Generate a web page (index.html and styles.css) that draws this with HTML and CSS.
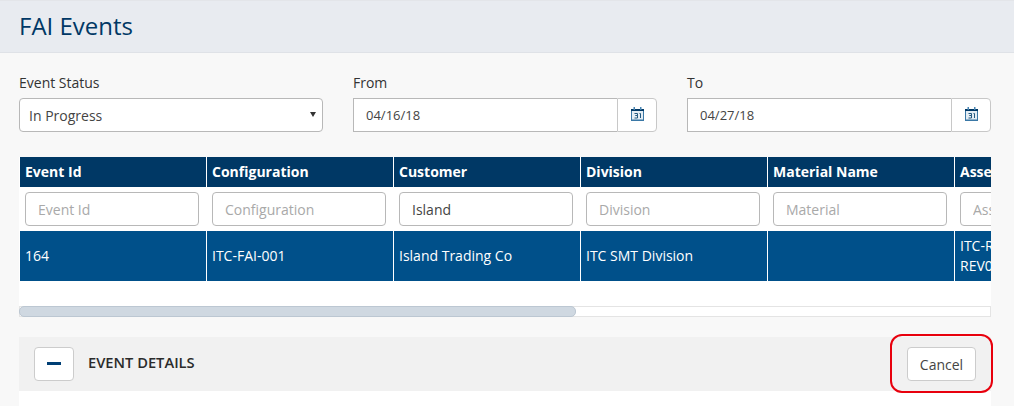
FILE: index.html
```html
<!DOCTYPE html>
<html lang="en">
<head>
<meta charset="utf-8">
<title>FAI Events</title>
<link rel="stylesheet" href="styles.css">
</head>
<body>
<header class="page-head"><h1>FAI Events</h1></header>
<main class="content">
  <form class="filters">
    <div class="field">
      <label for="status">Event Status</label>
      <div class="select-wrap">
        <select id="status" class="control"><option>In Progress</option></select>
      </div>
    </div>
    <div class="field">
      <label for="from">From</label>
      <div class="date-group">
        <input id="from" class="control date" type="text" value="04/16/18">
        <span class="addon"><svg class="cal" viewBox="0 0 13 14" width="13" height="14"><rect x="0.5" y="2.5" width="12" height="11" fill="#e4edf4" stroke="#3a78a6"/><rect x="0" y="2" width="13" height="2" fill="#003865"/><rect x="2.5" y="0" width="1.5" height="3" fill="#4a86b3"/><rect x="9" y="0" width="1.5" height="3" fill="#4a86b3"/><path d="M3.5 6.5h3v2h-2h2v2.5h-3M8.5 6.5h1v4.500" fill="none" stroke="#22587f" stroke-width="1"/><path d="M1 12.500h11" stroke="#8fb2cc" stroke-width="1"/></svg></span>
      </div>
    </div>
    <div class="field">
      <label for="to">To</label>
      <div class="date-group">
        <input id="to" class="control date" type="text" value="04/27/18">
        <span class="addon"><svg class="cal" viewBox="0 0 13 14" width="13" height="14"><rect x="0.5" y="2.5" width="12" height="11" fill="#e4edf4" stroke="#3a78a6"/><rect x="0" y="2" width="13" height="2" fill="#003865"/><rect x="2.5" y="0" width="1.5" height="3" fill="#4a86b3"/><rect x="9" y="0" width="1.5" height="3" fill="#4a86b3"/><path d="M3.5 6.5h3v2h-2h2v2.5h-3M8.5 6.5h1v4.500" fill="none" stroke="#22587f" stroke-width="1"/><path d="M1 12.500h11" stroke="#8fb2cc" stroke-width="1"/></svg></span>
      </div>
    </div>
  </form>

  <section class="grid-panel">
    <div class="grid-clip">
      <table class="grid">
        <thead>
          <tr class="head-row">
            <th>Event Id</th><th>Configuration</th><th>Customer</th><th>Division</th><th>Material Name</th><th>Assembly</th>
          </tr>
          <tr class="filter-row">
            <td><input class="control cell-input" placeholder="Event Id"></td>
            <td><input class="control cell-input" placeholder="Configuration"></td>
            <td><input class="control cell-input" value="Island"></td>
            <td><input class="control cell-input" placeholder="Division"></td>
            <td><input class="control cell-input" placeholder="Material"></td>
            <td><input class="control cell-input" placeholder="Assembly"></td>
          </tr>
        </thead>
        <tbody>
          <tr class="data-row">
            <td>164</td><td>ITC-FAI-001</td><td>Island Trading Co</td><td>ITC SMT Division</td><td></td><td>ITC-R<br>REV0</td>
          </tr>
        </tbody>
      </table>
    </div>
    <div class="scroll-track"><div class="scroll-thumb"></div></div>
  </section>

  <section class="details-bar">
    <button class="toggle" type="button" aria-label="Collapse"><span class="minus"></span></button>
    <h2>EVENT DETAILS</h2>
    <button class="cancel" type="button">Cancel</button>
    <span class="highlight"></span>
  </section>
  <div class="details-body"></div>
</main>
</body>
</html>
```
FILE: styles.css
```css
* { box-sizing: border-box; }
html, body { margin: 0; height: 100%; }
body {
  width: 1014px;
  height: 406px;
  overflow: hidden;
  background: #f8f8f8;
  font-family: "Open Sans", sans-serif;
  font-size: 14px;
  color: #333;
}
.page-head {
  height: 53px;
  background: #e8ebf0;
  border-top: 1px solid #e3e5e9;
  border-bottom: 1px solid #dfe2e7;
  padding-left: 19px;
}
.page-head h1 {
  margin: 0;
  font-size: 24px;
  font-weight: 400;
  line-height: 49px;
  color: #003865;
}
.content { padding: 20px 23px 0 19px; }
.filters {
  display: grid;
  grid-template-columns: repeat(3, 304px);
  column-gap: 30px;
}
.field label {
  display: block;
  height: 25px;
  line-height: 20px;
  font-size: 14px;
  color: #333;
}
.control {
  font-family: inherit;
  font-size: 14px;
  color: #444;
  background: #fff;
  border: 1px solid #b8b8b8;
  border-radius: 4px;
  height: 34px;
  outline: none;
}
.select-wrap { position: relative; width: 304px; }
.select-wrap select {
  width: 100%;
  appearance: none;
  padding: 0 9px;
}
.select-wrap::after {
  content: "";
  position: absolute;
  right: 7px;
  top: 14px;
  border-left: 3px solid transparent;
  border-right: 3px solid transparent;
  border-top: 5px solid #333;
}
.date-group { display: flex; height: 34px; }
.date {
  flex: 1;
  min-width: 0;
  padding: 0 12px;
  font-size: 13px;
  border-radius: 0;
  border-right: 0;
}
.addon {
  flex: 0 0 40px;
  display: flex;
  align-items: center;
  justify-content: center;
  background: #fff;
  border: 1px solid #c8c8c8;
  border-radius: 0 4px 4px 0;
}
.cal { display: block; margin-top: -2px; }
.grid-panel {
  margin-top: 25px;
  background: #fff;
  height: 160px;
}
.grid-clip { width: 972px; height: 149px; overflow: hidden; padding-left: 1px; }
.grid {
  table-layout: fixed;
  width: 1121px;
  border-collapse: separate;
  border-spacing: 0;
}
.grid th, .grid td {
  width: 187px;
  padding: 0 5px;
  text-align: left;
  border-left: 1px solid #fff;
}
.grid th:first-child, .grid td:first-child { width: 186px; border-left: 0; }
.head-row { height: 30px; background: #003865; color: #fff; }
.head-row th { font-size: 14px; font-weight: 700; padding-bottom: 2px; }
.filter-row { height: 44px; background: #fff; }
.cell-input {
  display: block;
  width: 174px;
  padding: 0 12px;
}
.cell-input::placeholder { color: #a9a9a9; opacity: 1; }
.data-row { height: 50px; background: #00508a; color: #fff; }
.data-row td { font-size: 14px; line-height: 20px; }
.scroll-track {
  height: 11px;
  background: #fff;
  border: 1px solid #e4e4e4;
}
.scroll-thumb {
  width: 557px;
  height: 11px;
  margin: -1px 0 0 -1px;
  background: #cfd8e1;
  border: 1px solid #bcc7d2;
  border-radius: 5px;
}
.details-bar {
  position: relative;
  margin-top: 20px;
  height: 54px;
  background: #f1f1f1;
  display: flex;
  align-items: center;
  padding: 0 15px;
}
.toggle {
  width: 40px;
  height: 34px;
  padding: 0;
  background: #fff;
  border: 1px solid #ccc;
  border-radius: 4px;
  display: flex;
  align-items: center;
  justify-content: center;
}
.minus { display: block; width: 14px; height: 3px; margin-bottom: 2px; background: #003f75; }
.details-bar h2 {
  margin: 0 0 4px 14px;
  font-size: 14.7px;
  font-weight: 600;
  color: #2b2b2b;
}
.cancel {
  margin-left: auto;
  width: 69px;
  height: 34px;
  padding: 0;
  font-family: inherit;
  font-size: 14px;
  color: #444;
  background: #fff;
  border: 1px solid #ccc;
  border-radius: 4px;
}
.highlight {
  position: absolute;
  left: 871px;
  top: -3px;
  width: 103px;
  height: 59px;
  border: 2px solid #e8000d;
  border-radius: 12px;
  pointer-events: none;
}
.details-body { height: 15px; background: #fff; }
```
